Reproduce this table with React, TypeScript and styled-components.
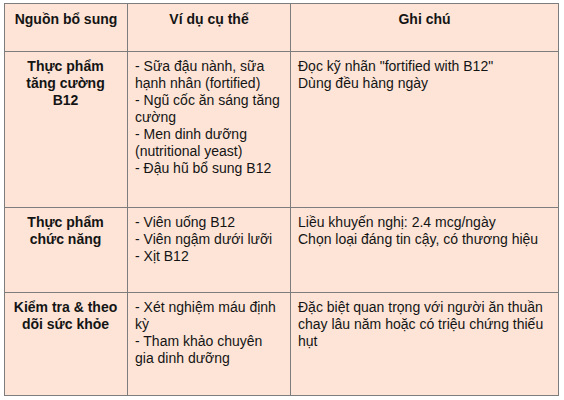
import * as React from "react";
import styled, { createGlobalStyle } from "styled-components";

const GlobalStyle = createGlobalStyle`
  html, body {
    margin: 0;
    padding: 0;
    background: #ffffff;
  }
  body {
    font-family: "Liberation Sans", Arial, sans-serif;
    color: #141414;
  }
`;

const Page = styled.div`
  padding: 3px 0 0 4px;
`;

const Table = styled.div`
  display: grid;
  grid-template-columns: 123px 163px 268px;
  grid-template-rows: 48px 156px 85px 103px;
  width: 555px;
  background: #fde4d7;
  border-top: 1px solid #7d7d7d;
  border-left: 1px solid #7d7d7d;
  box-sizing: border-box;
`;

interface CellProps {
  $head?: boolean;
  $center?: boolean;
}

const Cell = styled.div<CellProps>`
  box-sizing: border-box;
  border-right: 1px solid #7d7d7d;
  border-bottom: 1px solid #7d7d7d;
  padding: ${p => (p.$head ? "7px 7px" : p.$center ? "6px 9px 0 8px" : "6px 6px 0 7px")};
  font-size: 14px;
  line-height: 17px;
  font-weight: ${p => (p.$head || p.$center ? "bold" : "normal")};
  text-align: ${p => (p.$head || p.$center ? "center" : "left")};
`;

const Line = styled.div``;

interface Row {
  source: string;
  examples: string[];
  notes: string[];
}

const rows: Row[] = [
  {
    source: "Thực phẩm tăng cường B12",
    examples: [
      "- Sữa đậu nành, sữa hạnh nhân (fortified)",
      "- Ngũ cốc ăn sáng tăng cường",
      "- Men dinh dưỡng (nutritional yeast)",
      "- Đậu hũ bổ sung B12",
    ],
    notes: ['Đọc kỹ nhãn "fortified with B12"', "Dùng đều hàng ngày"],
  },
  {
    source: "Thực phẩm chức năng",
    examples: ["- Viên uống B12", "- Viên ngậm dưới lưỡi", "- Xịt B12"],
    notes: ["Liều khuyến nghị: 2.4 mcg/ngày", "Chọn loại đáng tin cậy, có thương hiệu"],
  },
  {
    source: "Kiểm tra & theo dõi sức khỏe",
    examples: ["- Xét nghiệm máu định kỳ", "- Tham khảo chuyên gia dinh dưỡng"],
    notes: ["Đặc biệt quan trọng với người ăn thuần chay lâu năm hoặc có triệu chứng thiếu hụt"],
  },
];

const App = () => {
  return (
    <Page>
      <GlobalStyle />
      <Table>
        <Cell $head>Nguồn bổ sung</Cell>
        <Cell $head>Ví dụ cụ thể</Cell>
        <Cell $head>Ghi chú</Cell>
        {rows.map(row => (
          <React.Fragment key={row.source}>
            <Cell $center>{row.source}</Cell>
            <Cell>
              {row.examples.map(e => (
                <Line key={e}>{e}</Line>
              ))}
            </Cell>
            <Cell>
              {row.notes.map(n => (
                <Line key={n}>{n}</Line>
              ))}
            </Cell>
          </React.Fragment>
        ))}
      </Table>
    </Page>
  );
};

export default App;
